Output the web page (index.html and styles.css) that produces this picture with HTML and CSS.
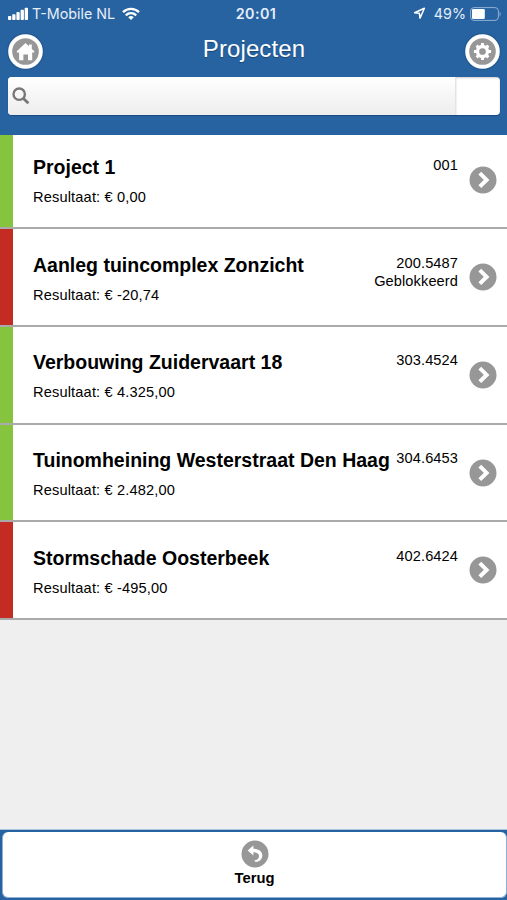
FILE: index.html
```html
<!DOCTYPE html>
<html lang="nl">
<head>
    <meta charset="UTF-8">
    <meta name="viewport" content="width=device-width, initial-scale=1.0">
    <title>Projecten</title>
    <link rel="stylesheet" href="styles.css">
</head>
<body>
    <!-- icons used more than once -->
    <svg class="defs" width="0" height="0">
        <symbol id="chevron" viewBox="0 0 28 28">
            <circle cx="14" cy="14" r="13.5" fill="#979797"/>
            <path d="M10.8 7.2l6.8 6.7-6.8 6.7" fill="none" stroke="#fff" stroke-width="4"/>
        </symbol>
    </svg>
    <header>
        <div class="status">
            <div class="carrier">
                <svg width="21" height="14" viewBox="0 0 21 14" fill="#fff">
                    <rect x="0" y="9" width="3.3" height="4" rx="0.8"/>
                    <rect x="4.2" y="7.3" width="3.3" height="5.7" rx="0.8"/>
                    <rect x="8.4" y="5" width="3.3" height="8" rx="0.8"/>
                    <rect x="12.6" y="2.8" width="3.3" height="10.2" rx="0.8"/>
                    <rect x="16.7" y="0.7" width="3.3" height="12.3" rx="0.8"/>
                </svg>
                <span class="carrier-name">T-Mobile NL</span>
                <svg width="18" height="14" viewBox="0 0 18 14" fill="none" stroke="#fff" stroke-width="2.3">
                    <path d="M1 5.2a11.5 11.5 0 0 1 16 0"/>
                    <path d="M3.8 8.3a7.5 7.5 0 0 1 10.4 0"/>
                    <path d="M6.2 10.3a4 4 0 0 1 5.6 0L9 13z" fill="#fff" stroke="none"/>
                </svg>
            </div>
            <span class="time">20:01</span>
            <div class="battery">
                <svg width="13" height="13" viewBox="0 0 13 13">
                    <path d="M1.6 5.8L11.4 1.2 7 11.2 6.4 6.3z" fill="none" stroke="#fff" stroke-width="1.5" stroke-linejoin="round"/>
                </svg>
                <span class="percent">49%</span>
                <svg width="32" height="14" viewBox="0 0 32 14">
                    <rect x="0.6" y="0.6" width="27.8" height="12.8" rx="3.4" fill="none" stroke="#8fb0d4" stroke-width="1"/>
                    <rect x="2" y="2" width="12.8" height="10" rx="1.2" fill="#fff"/>
                    <path d="M29.6 4.5q2.2 2.5 0 5z" fill="#8fb0d4"/>
                </svg>
            </div>
        </div>
        <div class="titlebar">
            <a href="#" class="round" aria-label="Home">
                <svg width="35" height="35" viewBox="0 0 35 35">
                    <circle cx="17.5" cy="17.5" r="15.3" fill="#979797" stroke="#fff" stroke-width="4"/>
                    <path d="M17.5 9l3.5 3.3v-1.8h2.8v4.4l2.5 2.4v1.1h-2.1v7.8H20v-5.6h-4.6v5.6h-4.3v-7.8H8.8v-1.1z" fill="#fff"/>
                </svg>
            </a>
            <h1>Projecten</h1>
            <a href="#" class="round" aria-label="Instellingen">
                <svg width="35" height="35" viewBox="0 0 35 35">
                    <circle cx="17.5" cy="17.5" r="15.3" fill="#979797" stroke="#fff" stroke-width="4"/>
                    <circle cx="17.5" cy="17.5" r="5" fill="none" stroke="#fff" stroke-width="3.3"/>
                    <g stroke="#fff" stroke-width="2.9">
                        <path d="M17.5 8.9v3M17.5 23.1v3M8.9 17.5h3M23.1 17.5h3"/>
                        <path d="M11.6 11.6l2 2M21.4 21.4l2 2M11.6 23.4l2-2M21.4 13.6l2-2"/>
                    </g>
                </svg>
            </a>
        </div>
        <div class="search">
            <div class="search-field">
                <svg width="18" height="18" viewBox="0 0 18 18" fill="none" stroke="#777">
                    <circle cx="7.2" cy="7.2" r="5.7" stroke-width="2.4"/>
                    <path d="M11.4 11.4l5 4.8" stroke-width="2.8"/>
                </svg>
            </div>
            <div class="search-clear"></div>
        </div>
    </header>

    <main>
        <a href="#" class="project green">
            <div class="info">
                <h2>Project 1</h2>
                <p>Resultaat: € 0,00</p>
            </div>
            <div class="code">001</div>
            <svg class="arrow"><use href="#chevron"/></svg>
        </a>
        <a href="#" class="project red">
            <div class="info">
                <h2>Aanleg tuincomplex Zonzicht</h2>
                <p>Resultaat: € -20,74</p>
            </div>
            <div class="code">200.5487<br>Geblokkeerd</div>
            <svg class="arrow"><use href="#chevron"/></svg>
        </a>
        <a href="#" class="project green">
            <div class="info">
                <h2>Verbouwing Zuidervaart 18</h2>
                <p>Resultaat: € 4.325,00</p>
            </div>
            <div class="code">303.4524</div>
            <svg class="arrow"><use href="#chevron"/></svg>
        </a>
        <a href="#" class="project green">
            <div class="info">
                <h2>Tuinomheining Westerstraat Den Haag</h2>
                <p>Resultaat: € 2.482,00</p>
            </div>
            <div class="code">304.6453</div>
            <svg class="arrow"><use href="#chevron"/></svg>
        </a>
        <a href="#" class="project red">
            <div class="info">
                <h2>Stormschade Oosterbeek</h2>
                <p>Resultaat: € -495,00</p>
            </div>
            <div class="code">402.6424</div>
            <svg class="arrow"><use href="#chevron"/></svg>
        </a>
    </main>

    <footer>
        <a href="#" class="back">
            <svg width="28" height="28" viewBox="0 0 28 28">
                <circle cx="14" cy="14" r="13.5" fill="#979797"/>
                <path d="M6.6 10.6L12.4 5.6v3.1C18.2 9 21.6 11.8 21.3 16c-.3 3.4-2.8 5.6-6.8 6.1l-1.3-1.5c3.2-.6 4.8-2.2 4.8-4.4 0-2.4-2-3.8-5.6-3.9v3.2z" fill="#fff"/>
            </svg>
            <span>Terug</span>
        </a>
    </footer>
</body>
</html>
```
FILE: styles.css
```css
* {
    box-sizing: border-box;
}
body {
    margin: 0;
    height: 900px;
    display: flex;
    flex-direction: column;
    overflow: hidden;
    background: #efefef;
    color: #000;
    font-family: "Liberation Sans", Arial, sans-serif;
}
a {
    color: inherit;
    text-decoration: none;
}
svg {
    display: block;
    flex-shrink: 0;
}
.defs {
    position: absolute;
}
header {
    height: 135px;
    flex-shrink: 0;
    background: #2763a1;
    color: #fff;
}
.status {
    height: 27px;
    padding: 0 5px 0 8px;
    display: grid;
    grid-template-columns: 1fr auto 1fr;
    align-items: center;
    font-family: Inter, sans-serif;
    font-size: 14.3px;
    color: #e6eefa;
}
.carrier {
    display: flex;
    align-items: center;
    gap: 3px;
}
.carrier-name {
    margin-right: 4px;
}
.time {
    padding-left: 2px;
    font-weight: 600;
    letter-spacing: 0.4px;
}
.battery {
    display: flex;
    align-items: center;
    justify-content: flex-end;
}
.percent {
    margin: 0 4px 0 8px;
}
.titlebar {
    height: 50px;
    padding: 7px 7px 0 8px;
    display: flex;
    justify-content: space-between;
    align-items: flex-start;
}
.round {
    border-radius: 50%;
    box-shadow: 0 0 2px rgba(0, 0, 0, 0.35);
}
h1 {
    margin: 1px 0 0;
    font-size: 24px;
    line-height: 28px;
    font-weight: normal;
    letter-spacing: 0.1px;
    text-shadow: 0 1px 1px #1a4675;
}
.search {
    height: 38px;
    margin: 0 7px 0 8px;
    display: flex;
    background: #fff;
    border-radius: 4px;
    overflow: hidden;
    box-shadow: 0 1px 1px #1c4a7c;
}
.search-field {
    flex: 1;
    display: flex;
    align-items: center;
    padding-left: 4px;
    background: linear-gradient(#fff, #ededed);
    border-right: 1px solid #e4e4e4;
}
.search-clear {
    width: 44px;
    box-shadow: inset 0 1px 2px rgba(0, 0, 0, 0.2);
}
.project {
    height: 97.7px;
    padding: 23.3px 10.5px 0 20px;
    display: flex;
    background: #fff;
    border-bottom: 2px solid #aaa;
    position: relative;
}
.project:first-child {
    height: 94.3px;
    padding-top: 20px;
}
.project::before {
    content: "";
    width: 13px;
    position: absolute;
    left: 0;
    top: 0;
    bottom: 0;
}
.green::before {
    background: #86c440;
}
.red::before {
    background: #c42b22;
}
.info {
    flex: 1;
    padding-left: 13px;
    white-space: nowrap;
}
h2 {
    margin: 0;
    font-size: 19.5px;
    line-height: 24px;
}
.info p {
    margin: 9px 0 0;
    font-size: 14.6px;
    line-height: 18px;
    letter-spacing: 0.16px;
}
.code {
    padding-top: 1.2px;
    font-size: 14.6px;
    line-height: 18px;
    letter-spacing: 0.1px;
    text-align: right;
}
.arrow {
    width: 28px;
    height: 28px;
    margin: 10.7px 0 0 10.5px;
}
footer {
    height: 71px;
    margin-top: auto;
    padding: 2px 0 3px 2px;
    background: #2763a1;
    border-top: 1px solid #a9c4de;
}
.back {
    height: 66px;
    display: flex;
    flex-direction: column;
    align-items: center;
    padding-top: 8px;
    background: #fff;
    border: 1px solid #8fb0d4;
    border-width: 0 1px 1px;
    border-radius: 6px;
    font-size: 14.8px;
    line-height: 20px;
    font-weight: bold;
}
```
